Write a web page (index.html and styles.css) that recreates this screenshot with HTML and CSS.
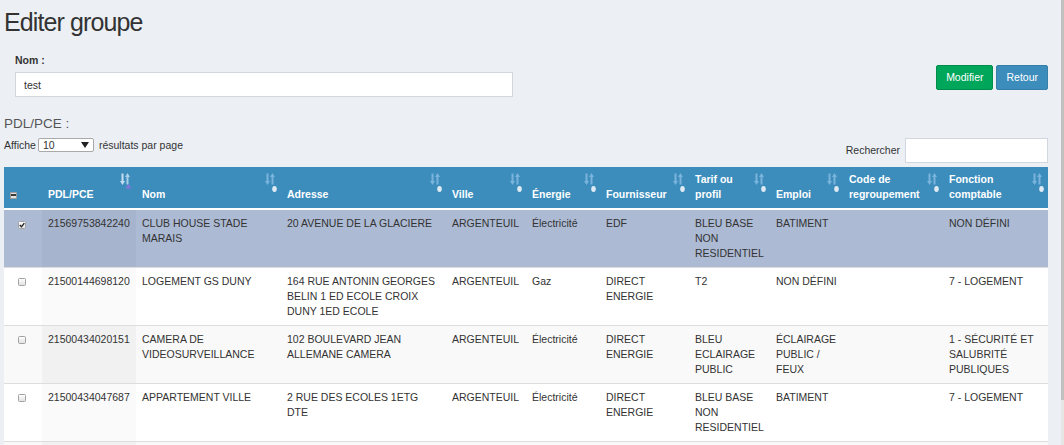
FILE: index.html
```html
<!DOCTYPE html>
<html lang="fr">
<head>
<meta charset="utf-8">
<title>Editer groupe</title>
<link rel="stylesheet" href="styles.css">
</head>
<body>
<svg class="svg-defs" aria-hidden="true">
  <symbol id="sort-both" viewBox="0 0 12 20">
    <path d="M1.5 0.5H3.5V8H5L2.5 12L0 8H1.5Z" fill="#7ab4dc"/>
    <path d="M7.5 0L10 4H8.5V11.5H6.5V4H5Z" fill="#7ab4dc"/>
    <ellipse cx="9.5" cy="16" rx="2.3" ry="3" fill="#dfeaf3"/>
  </symbol>
  <symbol id="sort-asc" viewBox="0 0 12 20">
    <path d="M1.5 0.5H3.5V8H5L2.5 12L0 8H1.5Z" fill="#c3ddef"/>
    <path d="M7.5 0L10 4H8.5V11.5H6.5V4H5Z" fill="#a9cee8"/>
    <path d="M5.5 15.5H11.5L8.5 11Z" fill="#8674dc"/>
  </symbol>
</svg>

<div class="page">
  <h1 class="title">Editer groupe</h1>

  <div class="form-row">
    <div class="field">
      <label class="field-label" for="nom">Nom :</label>
      <input class="text-input" id="nom" type="text" value="test">
    </div>
    <div class="actions">
      <button class="btn btn-success" type="button">Modifier</button>
      <button class="btn btn-primary" type="button">Retour</button>
    </div>
  </div>

  <h2 class="section-title">PDL/PCE :</h2>

  <div class="dt-controls">
    <div class="dt-length">
      <span>Affiche</span>
      <label class="select-wrap">
        <select class="length-select">
          <option>10</option>
          <option>25</option>
          <option>50</option>
          <option>100</option>
        </select>
        <span class="caret"></span>
      </label>
      <span>résultats par page</span>
    </div>
    <div class="dt-filter">
      <span>Rechercher</span>
      <input class="search-input" type="search">
    </div>
  </div>

  <table class="data-table">
    <colgroup>
      <col class="c-chk">
      <col class="c-pdl">
      <col class="c-nom">
      <col class="c-adr">
      <col class="c-ville">
      <col class="c-energie">
      <col class="c-four">
      <col class="c-tarif">
      <col class="c-emploi">
      <col class="c-code">
      <col class="c-fonction">
    </colgroup>
    <thead>
      <tr>
        <th class="th-check"><span class="hcheck"><span class="hcheck-bar"></span></span></th>
        <th>PDL/PCE<svg class="sort-icon"><use href="#sort-asc"/></svg></th>
        <th>Nom<svg class="sort-icon"><use href="#sort-both"/></svg></th>
        <th>Adresse<svg class="sort-icon"><use href="#sort-both"/></svg></th>
        <th>Ville<svg class="sort-icon"><use href="#sort-both"/></svg></th>
        <th>Énergie<svg class="sort-icon"><use href="#sort-both"/></svg></th>
        <th>Fournisseur<svg class="sort-icon"><use href="#sort-both"/></svg></th>
        <th>Tarif ou profil<svg class="sort-icon"><use href="#sort-both"/></svg></th>
        <th>Emploi<svg class="sort-icon"><use href="#sort-both"/></svg></th>
        <th>Code de regroupement<svg class="sort-icon"><use href="#sort-both"/></svg></th>
        <th>Fonction comptable<svg class="sort-icon"><use href="#sort-both"/></svg></th>
      </tr>
    </thead>
    <tbody>
      <tr class="row-odd row-selected">
        <td class="td-check"><span class="cbox"><svg class="cbox-check" viewBox="0 0 6 6"><path d="M0.8 3.1L2.5 4.8L5.3 1.1" fill="none" stroke="#222" stroke-width="1.4"/></svg></span></td>
        <td class="sorted">21569753842240</td>
        <td>CLUB HOUSE STADE MARAIS</td>
        <td>20 AVENUE DE LA GLACIERE</td>
        <td>ARGENTEUIL</td>
        <td>Électricité</td>
        <td>EDF</td>
        <td>BLEU BASE NON RESIDENTIEL</td>
        <td>BATIMENT</td>
        <td></td>
        <td>NON DÉFINI</td>
      </tr>
      <tr class="row-even">
        <td class="td-check"><span class="cbox"></span></td>
        <td class="sorted">21500144698120</td>
        <td>LOGEMENT GS DUNY</td>
        <td>164 RUE ANTONIN GEORGES BELIN 1 ED ECOLE CROIX DUNY 1ED ECOLE</td>
        <td>ARGENTEUIL</td>
        <td>Gaz</td>
        <td>DIRECT ENERGIE</td>
        <td>T2</td>
        <td>NON DÉFINI</td>
        <td></td>
        <td>7 - LOGEMENT</td>
      </tr>
      <tr class="row-odd">
        <td class="td-check"><span class="cbox"></span></td>
        <td class="sorted">21500434020151</td>
        <td>CAMERA DE VIDEOSURVEILLANCE</td>
        <td>102 BOULEVARD JEAN ALLEMANE CAMERA</td>
        <td>ARGENTEUIL</td>
        <td>Électricité</td>
        <td>DIRECT ENERGIE</td>
        <td>BLEU ECLAIRAGE PUBLIC</td>
        <td>ÉCLAIRAGE PUBLIC / FEUX</td>
        <td></td>
        <td>1 - SÉCURITÉ ET SALUBRITÉ PUBLIQUES</td>
      </tr>
      <tr class="row-even">
        <td class="td-check"><span class="cbox"></span></td>
        <td class="sorted">21500434047687</td>
        <td>APPARTEMENT VILLE</td>
        <td>2 RUE DES ECOLES 1ETG DTE</td>
        <td>ARGENTEUIL</td>
        <td>Électricité</td>
        <td>DIRECT ENERGIE</td>
        <td>BLEU BASE NON RESIDENTIEL</td>
        <td>BATIMENT</td>
        <td></td>
        <td>7 - LOGEMENT</td>
      </tr>
      <tr class="row-odd">
        <td class="td-check">&nbsp;</td>
        <td class="sorted">&nbsp;</td>
        <td>&nbsp;</td>
        <td>&nbsp;</td>
        <td>&nbsp;</td>
        <td>&nbsp;</td>
        <td>&nbsp;</td>
        <td>&nbsp;</td>
        <td>&nbsp;</td>
        <td>&nbsp;</td>
        <td>&nbsp;</td>
      </tr>
    </tbody>
  </table>
</div>

<div class="scrollbar"><div class="scrollbar-thumb"></div></div>
</body>
</html>
```

FILE: styles.css
```css
* {
  box-sizing: border-box;
}

html, body {
  margin: 0;
  padding: 0;
  height: 100%;
  overflow: hidden;
}

body {
  background: #ecf0f5;
  color: #333;
  font-family: "Liberation Sans", Arial, sans-serif;
  font-size: 10.5px;
  line-height: 15px;
}

.svg-defs {
  position: absolute;
  width: 0;
  height: 0;
  overflow: hidden;
}

.page {
  padding: 0 16px 0 4px;
}

.title {
  margin: 0;
  padding-top: 8px;
  font-size: 25px;
  line-height: 28px;
  font-weight: normal;
  letter-spacing: -0.9px;
  color: #333;
}

.form-row {
  margin-top: 17px;
  padding-left: 11px;
  display: flex;
  justify-content: space-between;
  align-items: flex-start;
}

.field {
  display: flex;
  flex-direction: column;
}

.field-label {
  font-weight: bold;
  line-height: 15px;
  margin-bottom: 4px;
}

.text-input {
  width: 498px;
  height: 25px;
  border: 1px solid #d2d6de;
  background: #fff;
  padding: 0 8px;
  font-family: inherit;
  font-size: 10.5px;
  color: #333;
  outline: none;
}

.actions {
  margin-top: 12px;
  display: flex;
  gap: 3px;
}

.btn {
  height: 25px;
  padding: 0 9px;
  border: 1px solid transparent;
  border-radius: 2px;
  color: #fff;
  font-family: inherit;
  font-size: 10.5px;
  font-weight: normal;
  line-height: 23px;
  cursor: pointer;
}

.btn-success {
  background: #00a65a;
  border-color: #008d4c;
}

.btn-primary {
  background: #3c8dbc;
  border-color: #367fa9;
}

.section-title {
  margin: 17px 0 0;
  font-size: 13.5px;
  line-height: 19px;
  font-weight: normal;
  color: #555;
}

.dt-controls {
  margin-top: 5px;
  display: flex;
  justify-content: space-between;
  align-items: flex-start;
}

.dt-length {
  display: flex;
  align-items: center;
  height: 14px;
}

.select-wrap {
  position: relative;
  display: block;
  width: 56px;
  height: 14px;
  margin: 0 5px 0 2px;
}

.length-select {
  appearance: none;
  -webkit-appearance: none;
  width: 56px;
  height: 14px;
  border: 1px solid #a9a9a9;
  border-radius: 2px;
  background: #fff;
  padding: 0 0 0 4px;
  margin: 0;
  font-family: inherit;
  font-size: 10.5px;
  line-height: 12px;
  color: #333;
  outline: none;
}

.caret {
  position: absolute;
  right: 5px;
  top: 4px;
  width: 0;
  height: 0;
  border-left: 4px solid transparent;
  border-right: 4px solid transparent;
  border-top: 6px solid #222;
  pointer-events: none;
}

.dt-filter {
  display: flex;
  align-items: center;
  gap: 5px;
}

.search-input {
  width: 143px;
  height: 25px;
  border: 1px solid #d2d6de;
  background: #fff;
  padding: 0 6px;
  font-family: inherit;
  font-size: 10.5px;
  outline: none;
}

.data-table {
  margin-top: 4px;
  width: 1044px;
  table-layout: fixed;
  border-collapse: collapse;
  border-spacing: 0;
}

.c-chk { width: 38px; }
.c-pdl { width: 94px; }
.c-nom { width: 145px; }
.c-adr { width: 165px; }
.c-ville { width: 80px; }
.c-energie { width: 74px; }
.c-four { width: 89px; }
.c-tarif { width: 81px; }
.c-emploi { width: 73px; }
.c-code { width: 100px; }
.c-fonction { width: 105px; }

.data-table th {
  position: relative;
  background: #3c8dbc;
  color: #fff;
  font-weight: bold;
  text-align: left;
  vertical-align: bottom;
  padding: 5px 22px 6px 6px;
  line-height: 15px;
  border-bottom: 2px solid #fff;
}

.data-table th.th-check {
  padding-right: 6px;
}

.sort-icon {
  position: absolute;
  right: 4px;
  top: 6px;
  width: 12px;
  height: 20px;
}

.hcheck {
  display: inline-flex;
  align-items: center;
  justify-content: center;
  width: 7px;
  height: 7px;
  background: #e2e2e2;
  border: 1px solid #9c9c9c;
  vertical-align: middle;
}

.hcheck-bar {
  width: 5px;
  height: 2px;
  background: #3a3a3a;
}

.data-table td {
  padding: 6px 5px 6px 6px;
  vertical-align: top;
  line-height: 15px;
  border-top: 1px solid #ddd;
  color: #333;
}

.data-table td.td-check {
  padding-left: 14px;
}

.cbox {
  display: inline-flex;
  align-items: center;
  justify-content: center;
  width: 8px;
  height: 8px;
  border: 1px solid #a2a2a2;
  border-radius: 1.5px;
  background: linear-gradient(#fdfdfd, #e2e2e2);
  vertical-align: -1px;
}

.cbox-check {
  width: 6px;
  height: 6px;
}

.row-even {
  background: #fff;
}

.row-even td.sorted {
  background: #fafafa;
}

.row-odd {
  background: #f9f9f9;
}

.row-odd td.sorted {
  background: #f1f1f1;
}

.row-selected {
  background: #acbad4;
}

.row-selected td.sorted {
  background: #a6b4cd;
}

.scrollbar {
  position: fixed;
  top: 0;
  right: 0;
  width: 3px;
  height: 100%;
  background: #e6e6e6;
}

.scrollbar-thumb {
  height: 400px;
  background: #c1c1c1;
}
```
